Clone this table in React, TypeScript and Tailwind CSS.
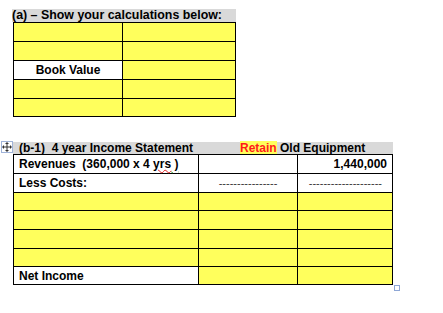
import React from "react";

const Y = "bg-[#ffff5c]";

function RowA({ left, h }: { left?: string; h: string }) {
  return (
    <div className={`flex ${h}`}>
      <div className={`w-[109px] border-r border-b border-black flex items-center justify-center ${left ? "bg-white" : Y}`}>
        {left}
      </div>
      <div className={`w-[113px] border-r border-b border-black ${Y}`} />
    </div>
  );
}

function RowB({
  h,
  c1,
  c2,
  c3,
  white1,
  white2,
  white3,
}: {
  h: string;
  c1?: React.ReactNode;
  c2?: React.ReactNode;
  c3?: React.ReactNode;
  white1?: boolean;
  white2?: boolean;
  white3?: boolean;
}) {
  return (
    <div className={`flex ${h}`}>
      <div className={`w-[185px] border-r border-b border-black flex items-center pl-[5px] ${white1 ? "bg-white" : Y}`}>{c1}</div>
      <div className={`w-[99px] border-r border-b border-black flex items-center justify-center ${white2 ? "bg-white" : Y}`}>{c2}</div>
      <div className={`w-[95px] border-r border-b border-black flex items-center justify-end pr-[5px] ${white3 ? "bg-white" : Y}`}>{c3}</div>
    </div>
  );
}

function MoveIcon() {
  return (
    <div className="w-[12px] h-[12px] border border-[#9fb3d9] bg-white flex items-center justify-center">
      <svg width="10" height="10" viewBox="0 0 10 10">
        <g stroke="#333" strokeWidth="1" fill="none">
          <line x1="5" y1="1" x2="5" y2="9" />
          <line x1="1" y1="5" x2="9" y2="5" />
        </g>
        <g fill="#333">
          <polygon points="5,0 3,2 7,2" />
          <polygon points="5,10 3,8 7,8" />
          <polygon points="0,5 2,3 2,7" />
          <polygon points="10,5 8,3 8,7" />
        </g>
      </svg>
    </div>
  );
}

export default function App() {
  const dash = "text-[11px] font-normal text-[#333]";
  return (
    <div className="w-[443px] h-[313px] bg-white text-black font-['Liberation_Sans',Arial,sans-serif] text-[12px] font-bold leading-none flex flex-col">
      {/* Section a */}
      <div className="ml-[12px] mt-[9px] w-[224px] h-[13px] bg-[#d9d9d9] leading-[13px] whitespace-pre text-[12.4px]">
        (a) – Show your calculations below:
      </div>
      <div className="ml-[13px] w-[223px] border-l border-t border-black">
        <RowA h="h-[19px]" />
        <RowA h="h-[19px]" />
        <RowA h="h-[19px]" left="Book Value" />
        <RowA h="h-[19px]" />
        <RowA h="h-[18px]" />
      </div>

      {/* Section b */}
      <div className="mt-[25px] flex items-start">
        <div className="ml-[1px] mt-[-1px]">
          <MoveIcon />
        </div>
        <div className="w-[380px] h-[12px] bg-[#d9d9d9] leading-[12px] whitespace-pre flex">
          <span className="ml-[6px] w-[221px]">
            (<span className="underline decoration-wavy decoration-[#3a9b3a] decoration-1">b</span>-1)  4 year Income Statement
          </span>
          <span>
            <span className="text-[#ff1a1a] bg-[#ffff5c]">Retain</span> Old Equipment
          </span>
        </div>
      </div>
      <div className="ml-[13px] w-[380px] border-l border-t border-black relative">
        <RowB
          h="h-[19px]"
          white1
          white2
          white3
          c1={
            <span className="whitespace-pre">
              Revenues  (360,000 x 4{" "}
              <span className="underline decoration-wavy decoration-[#e02020] decoration-1">yrs</span>
              <span className="underline decoration-wavy decoration-[#3a9b3a] decoration-1"> )</span>
            </span>
          }
          c3="1,440,000"
        />
        <RowB
          h="h-[19px]"
          white1
          white2
          white3
          c1="Less Costs:"
          c2={<span className={dash}>----------------</span>}
          c3={<span className={`${dash} mr-[5px]`}>--------------------</span>}
        />
        <RowB h="h-[18px]" />
        <RowB h="h-[19px]" />
        <RowB h="h-[19px]" />
        <RowB h="h-[18px]" />
        <RowB h="h-[18px]" white1 c1="Net Income" />
        <div className="absolute right-[-7px] bottom-[-6px] w-[6px] h-[6px] border border-[#8ea7d6] bg-white" />
      </div>
    </div>
  );
}
